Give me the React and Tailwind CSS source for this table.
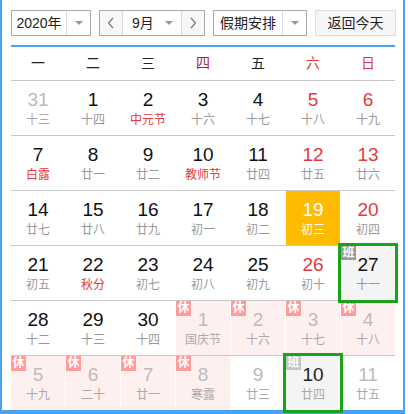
import React from "react";

const FONT = { fontFamily: '"Liberation Sans", "Noto Sans CJK SC", sans-serif' };

// kind: o = other month, w = weekend, f = festival text, t = today, s = selected
const rows = [
  [
    { d: 31, l: "十三", o: true },
    { d: 1, l: "十四" },
    { d: 2, l: "中元节", f: true },
    { d: 3, l: "十六" },
    { d: 4, l: "十七" },
    { d: 5, l: "十八", w: true },
    { d: 6, l: "十九", w: true },
  ],
  [
    { d: 7, l: "白露", f: true },
    { d: 8, l: "廿一" },
    { d: 9, l: "廿二" },
    { d: 10, l: "教师节", f: true },
    { d: 11, l: "廿四" },
    { d: 12, l: "廿五", w: true },
    { d: 13, l: "廿六", w: true },
  ],
  [
    { d: 14, l: "廿七" },
    { d: 15, l: "廿八" },
    { d: 16, l: "廿九" },
    { d: 17, l: "初一" },
    { d: 18, l: "初二" },
    { d: 19, l: "初三", t: true },
    { d: 20, l: "初四", w: true },
  ],
  [
    { d: 21, l: "初五" },
    { d: 22, l: "秋分", f: true },
    { d: 23, l: "初七" },
    { d: 24, l: "初八" },
    { d: 25, l: "初九" },
    { d: 26, l: "初十", w: true },
    { d: 27, l: "十一", s: true, ban: true },
  ],
  [
    { d: 28, l: "十二" },
    { d: 29, l: "十三" },
    { d: 30, l: "十四" },
    { d: 1, l: "国庆节", o: true, xiu: true },
    { d: 2, l: "十六", o: true, xiu: true },
    { d: 3, l: "十七", o: true, xiu: true },
    { d: 4, l: "十八", o: true, xiu: true },
  ],
  [
    { d: 5, l: "十九", o: true, xiu: true },
    { d: 6, l: "二十", o: true, xiu: true },
    { d: 7, l: "廿一", o: true, xiu: true },
    { d: 8, l: "寒露", o: true, xiu: true },
    { d: 9, l: "廿三", o: true },
    { d: 10, l: "廿四", o: true, s: true, ban: true },
    { d: 11, l: "廿五", o: true },
  ],
];

const weekdays = ["一", "二", "三", "四", "五", "六", "日"];

function Caret() {
  return <span className="block w-0 h-0 border-x-[4px] border-t-[4px] border-x-transparent border-t-[#999]" />;
}

function Chevron({ dir }) {
  return (
    <svg width="8" height="12" viewBox="0 0 8 12" fill="none" stroke="#777" strokeWidth="1.2">
      {dir === "left" ? <polyline points="6,1 1.5,6 6,11" /> : <polyline points="2,1 6.5,6 2,11" />}
    </svg>
  );
}

function Cell({ c }) {
  let bg = "bg-white";
  if (c.xiu) bg = "bg-[#fff0f0]";
  if (c.s) bg = "bg-[#f4f4f4]";
  if (c.t) bg = "bg-[#ffbb00]";

  let num = "text-[#111]";
  let lunar = "text-[#999]";
  if (c.w) num = "text-[#e4393c]";
  if (c.f) lunar = "text-[#e4393c]";
  if (c.o) {
    num = c.s ? "text-[#222]" : "text-[#bbb]";
    lunar = "text-[#aaa]";
  }
  if (c.t) {
    num = "text-white";
    lunar = "text-white";
  }

  return (
    <div
      className={`relative h-[54px] flex flex-col items-center justify-center ${bg} ${
        c.s ? "outline-3 outline-[#19a319] z-10" : ""
      }`}
    >
      {c.xiu && (
        <span className="absolute left-0 top-0 w-[15px] h-[15px] bg-[#ff9b9b] text-white text-[12px] leading-[15px] text-center font-bold">
          休
        </span>
      )}
      {c.ban && (
        <span
          className={`absolute left-0 top-0 w-[15px] h-[14px] text-white text-[12px] leading-[14px] text-center font-bold ${
            c.o ? "bg-[#c4c4c4]" : "bg-[#9a9a9a]"
          }`}
        >
          班
        </span>
      )}
      <div className={`text-[19px] leading-[20px] ${num}`}>{c.d}</div>
      <div className={`text-[12px] leading-[14px] mt-[3px] ${lunar}`}>{c.l}</div>
    </div>
  );
}

export default function App() {
  return (
    <div className="w-[408px] h-[414px] bg-white overflow-hidden" style={FONT}>
      <div className="w-[405px] border-x-2 border-b-[5px] border-[#4aa3f0] pl-[9px] pr-[8px] pt-[10px]">
        <div className="flex gap-2 h-[26px] text-[14px] text-[#222] w-[385px]">
          <div className="flex w-[80px] border border-[#a9a9a9] bg-white">
            <div className="flex-1 flex items-center justify-center">2020年</div>
            <div className="w-[24px] border-l border-[#ddd] flex items-center justify-center">
              <Caret />
            </div>
          </div>
          <div className="flex w-[106px] border border-[#a9a9a9] bg-white">
            <div className="w-[22px] flex items-center justify-center bg-[#f7f7f7]">
              <Chevron dir="left" />
            </div>
            <div className="flex-1 flex items-center border-x border-[#ddd] pl-[9px] pr-[8px]">
              <span className="flex-1">9月</span>
              <Caret />
            </div>
            <div className="w-[22px] flex items-center justify-center bg-[#f7f7f7]">
              <Chevron dir="right" />
            </div>
          </div>
          <div className="flex w-[94px] border border-[#a9a9a9] bg-white">
            <div className="flex-1 flex items-center justify-center">假期安排</div>
            <div className="w-[24px] border-l border-[#ddd] flex items-center justify-center">
              <Caret />
            </div>
          </div>
          <button className="w-[81px] border border-[#ddd] bg-[#f6f6f6] flex items-center justify-center">
            返回今天
          </button>
        </div>
        <div className="mt-[9px] h-[2px] bg-[#4aa3f0] w-[384px]" />
        <div className="w-[384px]">
          <div className="grid grid-cols-7 gap-x-px h-[33px] text-[14px]">
            {weekdays.map((w, i) => (
              <div
                key={w}
                className={`flex items-center justify-center ${
                  i >= 5 ? "text-[#e4393c]" : i === 3 ? "text-[#9b1d4f]" : "text-[#222]"
                }`}
              >
                {w}
              </div>
            ))}
          </div>
          {rows.map((row, ri) => (
            <div key={ri} className="grid grid-cols-7 gap-x-px border-t border-[#c8c8c8]">
              {row.map((c, ci) => (
                <Cell key={ci} c={c} />
              ))}
            </div>
          ))}
        </div>
      </div>
    </div>
  );
}
